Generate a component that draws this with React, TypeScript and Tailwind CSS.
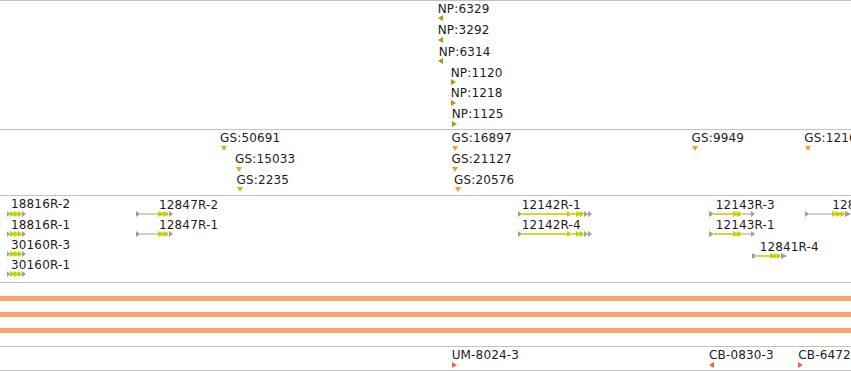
type Part = [kind: 'g' | 'gl' | 'yl' | 'y', w: number, n?: number];

const GRAY = '#9e9e9e';
const YEL = '#c4d300';

function Label({ x, cap, text }: { x: number; cap: number; text: string }) {
  return (
    <div
      className="absolute whitespace-nowrap text-[12px] leading-[12px] tracking-[0.15px] text-[#1c1c1c]"
      style={{ left: x - 1, top: cap - 1.5 }}
    >
      {text}
    </div>
  );
}

function Tri({ x, y, dir, color, w = 5, h = 5 }: { x: number; y: number; dir: 'l' | 'r' | 'd'; color: string; w?: number; h?: number }) {
  const d =
    dir === 'r' ? `M0 0L${w} ${h / 2}L0 ${h}Z` : dir === 'l' ? `M${w} 0L0 ${h / 2}L${w} ${h}Z` : `M0 0L${w} 0L${w / 2} ${h}Z`;
  return (
    <svg className="absolute" style={{ left: x, top: y }} width={w} height={h} viewBox={`0 0 ${w} ${h}`}>
      <path d={d} fill={color} />
    </svg>
  );
}

function Gene({ x, y, parts }: { x: number; y: number; parts: Part[] }) {
  let cx = 0;
  const els: JSX.Element[] = [];
  parts.forEach(([k, w, n = 1], i) => {
    if (k === 'gl' || k === 'yl') {
      els.push(<rect key={i} x={cx} y={k === 'yl' ? 2.2 : 2.5} width={w} height={k === 'yl' ? 1.6 : 1} fill={k === 'yl' ? YEL : GRAY} />);
    } else {
      const col = k === 'y' ? YEL : GRAY;
      const step = w / n;
      if (k === 'y') els.push(<rect key={i + 'b'} x={cx} y={1.5} width={w - 1} height={3} fill={col} />);
      for (let j = 0; j < n; j++) {
        const s = cx + j * step;
        els.push(<path key={i + '-' + j} d={`M${s} 0L${s + step} 3L${s} 6Z`} fill={col} />);
      }
    }
    cx += w;
  });
  return (
    <svg className="absolute" style={{ left: x, top: y }} width={cx} height={6} viewBox={`0 0 ${cx} 6`}>
      {els}
    </svg>
  );
}

const np = [
  { x: 438.7, cap: 4, t: 'NP:6329', tx: 437.5, ty: 15, d: 'l' as const },
  { x: 438.7, cap: 25, t: 'NP:3292', tx: 437.5, ty: 37, d: 'l' as const },
  { x: 439.7, cap: 47, t: 'NP:6314', tx: 437.5, ty: 58, d: 'l' as const },
  { x: 451.7, cap: 68, t: 'NP:1120', tx: 451, ty: 79, d: 'r' as const },
  { x: 451.7, cap: 88.5, t: 'NP:1218', tx: 451, ty: 100, d: 'r' as const },
  { x: 452.7, cap: 109, t: 'NP:1125', tx: 452, ty: 121, d: 'r' as const },
];

const gs = [
  { x: 221, cap: 133.3, t: 'GS:50691' },
  { x: 236, cap: 154.3, t: 'GS:15033' },
  { x: 237.5, cap: 175, t: 'GS:2235' },
  { x: 452.5, cap: 133.3, t: 'GS:16897' },
  { x: 452.5, cap: 154.3, t: 'GS:21127' },
  { x: 455, cap: 175, t: 'GS:20576' },
  { x: 692.5, cap: 133.3, t: 'GS:9949' },
  { x: 805.3, cap: 133.3, t: 'GS:12160' },
];

const genes: { x: number; cap: number; t: string; gx: number; gy: number; parts: Part[] }[] = [
  { x: 12, cap: 199.5, t: '18816R-2', gx: 7, gy: 211, parts: [['g', 3], ['y', 12, 3], ['g', 4]] },
  { x: 12, cap: 220, t: '18816R-1', gx: 7, gy: 231, parts: [['g', 3], ['y', 12, 3], ['g', 4]] },
  { x: 12, cap: 240, t: '30160R-3', gx: 7, gy: 251, parts: [['g', 3], ['y', 12, 3], ['g', 4]] },
  { x: 12, cap: 260, t: '30160R-1', gx: 7, gy: 271, parts: [['g', 3], ['y', 12, 3], ['g', 4]] },
  { x: 160, cap: 200, t: '12847R-2', gx: 136, gy: 210.5, parts: [['g', 4], ['gl', 18], ['y', 11, 2], ['g', 4]] },
  { x: 160, cap: 220.5, t: '12847R-1', gx: 136, gy: 231, parts: [['g', 4], ['gl', 18], ['y', 11, 2], ['g', 4]] },
  { x: 522.7, cap: 200, t: '12142R-1', gx: 518, gy: 210.5, parts: [['g', 4], ['yl', 45], ['y', 4, 1], ['yl', 5], ['y', 8, 2], ['g', 8, 2]] },
  { x: 522.7, cap: 220.5, t: '12142R-4', gx: 518, gy: 231, parts: [['g', 4], ['yl', 45], ['y', 4, 1], ['yl', 5], ['y', 8, 2], ['g', 8, 2]] },
  { x: 716.7, cap: 200, t: '12143R-3', gx: 709, gy: 210.5, parts: [['g', 5], ['yl', 19], ['y', 9, 2], ['gl', 9], ['g', 4]] },
  { x: 716.7, cap: 220.5, t: '12143R-1', gx: 709, gy: 231, parts: [['g', 5], ['yl', 19], ['y', 9, 2], ['gl', 9], ['g', 4]] },
  { x: 760.7, cap: 242.7, t: '12841R-4', gx: 752, gy: 252.5, parts: [['g', 5], ['yl', 13], ['y', 11, 3], ['g', 6]] },
  { x: 833.3, cap: 200, t: '12843R-2', gx: 805, gy: 210.5, parts: [['g', 4], ['gl', 23], ['y', 13, 3], ['g', 6]] },
];

const cb = [
  { x: 452.7, t: 'UM-8024-3', tx: 452, d: 'r' as const },
  { x: 710, t: 'CB-0830-3', tx: 708.5, d: 'l' as const },
  { x: 799.3, t: 'CB-6472', tx: 797.5, d: 'r' as const },
];

export default function App() {
  return (
    <div className="w-[851px] h-[371px] overflow-hidden bg-white font-['DejaVu_Sans',sans-serif]">
      <div className="relative h-[130px] border-y border-[#c2c2c2]">
        {np.map((f) => (
          <div key={f.t}>
            <Label x={f.x} cap={f.cap - 1} text={f.t} />
            <Tri x={f.tx} y={f.ty - 1} dir={f.d} color="#c58d0e" w={5} h={6} />
          </div>
        ))}
      </div>
      <div className="relative h-[66px] border-b border-[#c2c2c2]">
        {gs.map((f) => (
          <div key={f.t}>
            <Label x={f.x} cap={f.cap - 130} text={f.t} />
            <Tri x={Math.floor(f.x) - 0.5} y={f.cap + 12.3 - 130} dir="d" color="#eca523" w={6} h={5} />
          </div>
        ))}
      </div>
      <div className="relative h-[87px] border-b border-[#c2c2c2]">
        {genes.map((f) => (
          <div key={f.t}>
            <Label x={f.x} cap={f.cap - 196} text={f.t} />
            <Gene x={f.gx} y={f.gy - 196} parts={f.parts} />
          </div>
        ))}
      </div>
      <div className="flex h-[64px] flex-col gap-[11px] border-b border-[#c2c2c2] pt-[13px]">
        <div className="h-[5px] bg-[#f4a46f]" />
        <div className="h-[5px] bg-[#f4a46f]" />
        <div className="h-[5px] bg-[#f4a46f]" />
      </div>
      <div className="relative h-[24px] border-b border-[#c2c2c2]">
        {cb.map((f) => (
          <div key={f.t}>
            <Label x={f.x} cap={350.7 - 347} text={f.t} />
            <Tri x={f.tx} y={361.5 - 347} dir={f.d} color="#f4623a" w={5} h={6} />
          </div>
        ))}
      </div>
    </div>
  );
}
